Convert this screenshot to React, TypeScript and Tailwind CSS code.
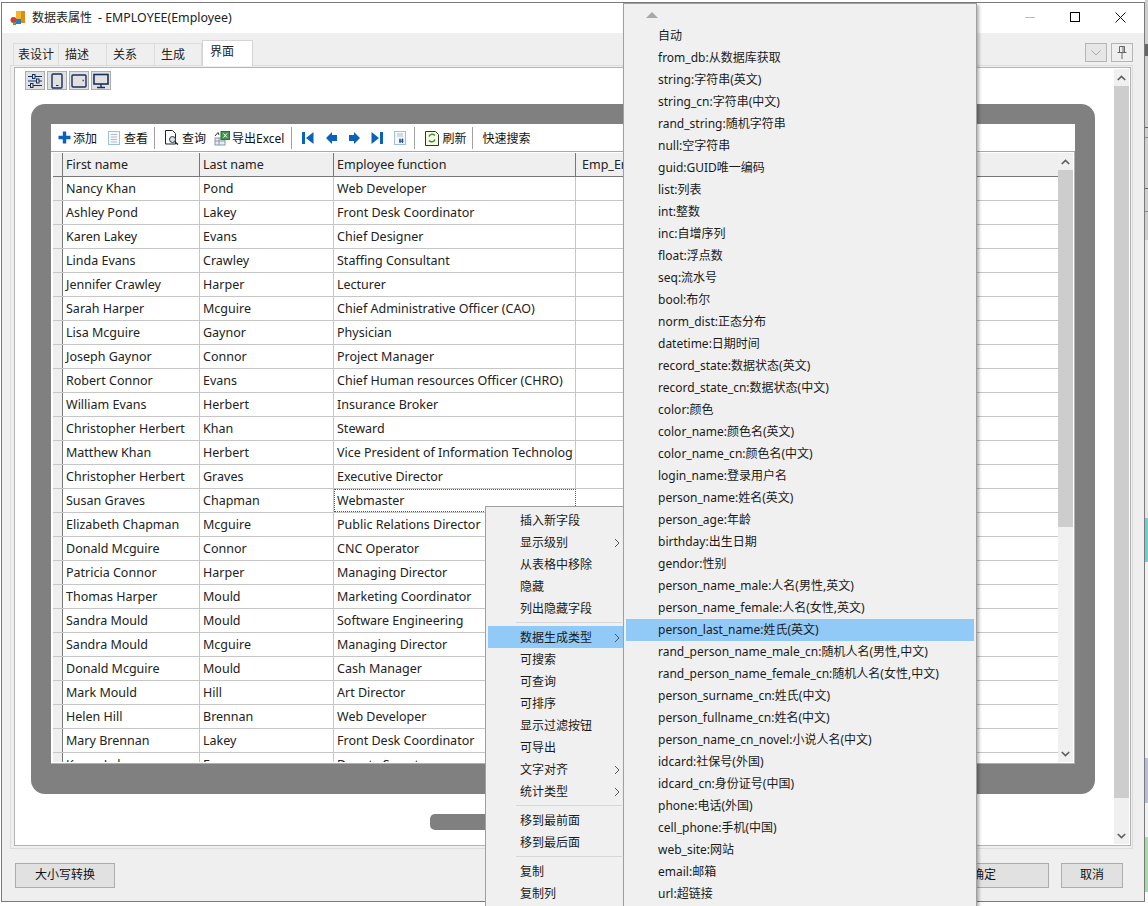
import React from "react";

const people: [string, string, string][] = [
  ["Nancy Khan", "Pond", "Web Developer"],
  ["Ashley Pond", "Lakey", "Front Desk Coordinator"],
  ["Karen Lakey", "Evans", "Chief Designer"],
  ["Linda Evans", "Crawley", "Staffing Consultant"],
  ["Jennifer Crawley", "Harper", "Lecturer"],
  ["Sarah Harper", "Mcguire", "Chief Administrative Officer (CAO)"],
  ["Lisa Mcguire", "Gaynor", "Physician"],
  ["Joseph Gaynor", "Connor", "Project Manager"],
  ["Robert Connor", "Evans", "Chief Human resources Officer (CHRO)"],
  ["William Evans", "Herbert", "Insurance Broker"],
  ["Christopher Herbert", "Khan", "Steward"],
  ["Matthew Khan", "Herbert", "Vice President of Information Technology"],
  ["Christopher Herbert", "Graves", "Executive Director"],
  ["Susan Graves", "Chapman", "Webmaster"],
  ["Elizabeth Chapman", "Mcguire", "Public Relations Director"],
  ["Donald Mcguire", "Connor", "CNC Operator"],
  ["Patricia Connor", "Harper", "Managing Director"],
  ["Thomas Harper", "Mould", "Marketing Coordinator"],
  ["Sandra Mould", "Mould", "Software Engineering"],
  ["Sandra Mould", "Mcguire", "Managing Director"],
  ["Donald Mcguire", "Mould", "Cash Manager"],
  ["Mark Mould", "Hill", "Art Director"],
  ["Helen Hill", "Brennan", "Web Developer"],
  ["Mary Brennan", "Lakey", "Front Desk Coordinator"],
  ["Karen Lakey", "Evans", "Deputy Secretary"],
];

const genTypes = [
  "自动","from_db:从数据库获取","string:字符串(英文)","string_cn:字符串(中文)","rand_string:随机字符串","null:空字符串","guid:GUID唯一编码","list:列表","int:整数","inc:自增序列","float:浮点数","seq:流水号","bool:布尔","norm_dist:正态分布","datetime:日期时间","record_state:数据状态(英文)","record_state_cn:数据状态(中文)","color:颜色","color_name:颜色名(英文)","color_name_cn:颜色名(中文)","login_name:登录用户名","person_name:姓名(英文)","person_age:年龄","birthday:出生日期","gendor:性别","person_name_male:人名(男性,英文)","person_name_female:人名(女性,英文)","person_last_name:姓氏(英文)","rand_person_name_male_cn:随机人名(男性,中文)","rand_person_name_female_cn:随机人名(女性,中文)","person_surname_cn:姓氏(中文)","person_fullname_cn:姓名(中文)","person_name_cn_novel:小说人名(中文)","idcard:社保号(外国)","idcard_cn:身份证号(中国)","phone:电话(外国)","cell_phone:手机(中国)","web_site:网站","email:邮箱","url:超链接",
];

function Up() {
  return (
    <svg viewBox="0 0 9 6" className="w-[9px] h-[6px]">
      <path d="M.8 5 4.5 1.4 8.2 5" fill="none" stroke="#606060" strokeWidth="1.7" />
    </svg>
  );
}
function Down() {
  return (
    <svg viewBox="0 0 9 6" className="w-[9px] h-[6px]">
      <path d="M.8 1 4.5 4.6 8.2 1" fill="none" stroke="#606060" strokeWidth="1.7" />
    </svg>
  );
}

function Scrollbar({ thumbHeight, className = "" }: { thumbHeight: number; className?: string }) {
  return (
    <div className={"flex flex-col bg-[#f0f0f0] w-[15px] " + className}>
      <div className="h-[17px] flex items-center justify-center shrink-0"><Up /></div>
      <div className="flex-1 min-h-0">
        <div className="bg-[#cdcdcd]" style={{ height: thumbHeight }} />
      </div>
      <div className="h-[17px] flex items-center justify-center shrink-0"><Down /></div>
    </div>
  );
}

function ToolText({ children, className = "" }: { children: React.ReactNode; className?: string }) {
  return <span className={"text-[12px] text-[#111] leading-none whitespace-nowrap pt-[2px] " + className}>{children}</span>;
}
function Sep({ className = "" }: { className?: string }) {
  return <div className={"w-px h-[22px] bg-[#a0a0a0] shrink-0 " + className} />;
}
function NavIcon({ d, className = "" }: { d: string; className?: string }) {
  return (
    <svg viewBox="0 0 12 12" className={"w-[12px] h-[12px] shrink-0 " + className}>
      <path d={d} fill="#0a62ba" />
    </svg>
  );
}

function ModeBtn({ children }: { children: React.ReactNode }) {
  return (
    <div className="w-[20px] h-[19px] bg-[#e1e1e1] border border-[#adadad] flex items-center justify-center">
      <svg viewBox="0 0 16 16" className="w-[16px] h-[16px]" fill="none" stroke="#14305e" strokeWidth="1">{children}</svg>
    </div>
  );
}

function Menu1Item({ label, arrow, active }: { label: string; arrow?: boolean; active?: boolean }) {
  return (
    <div className={"h-[22px] flex items-center pl-[32px] pr-[3px] ml-[2px] pt-px text-[12px] text-[#1a1a1a] " + (active ? "bg-[#91c9f7]" : "")}>
      <span className="flex-1 whitespace-nowrap">{label}</span>
      {arrow && (
        <svg viewBox="0 0 6 10" className="w-[6px] h-[10px] mr-px">
          <path d="M1 1 5 5 1 9" fill="none" stroke="#555" strokeWidth="1" />
        </svg>
      )}
    </div>
  );
}
function MenuSep() {
  return <div className="h-px bg-[#d7d7d7] ml-[30px] mr-[2px] my-[3px]" />;
}

export default function App() {
  return (
    <div className="relative w-[1148px] h-[906px] overflow-hidden bg-white font-['Noto_Sans','Noto_Sans_CJK_SC',sans-serif]">
      {/* slivers of the desktop behind the window */}
      <div className="absolute right-0 top-0 w-[3px] h-[240px] bg-[#cfcfcf]" />
      <div className="absolute right-0 top-[44px] w-[3px] h-[12px] bg-[#666666]" />
      <div className="absolute right-0 top-[127px] w-[3px] h-px bg-[#666666]" />
      <div className="absolute right-0 top-[137px] w-[3px] h-px bg-[#888888]" />
      <div className="absolute right-0 top-[188px] w-[3px] h-px bg-[#666666]" />
      <div className="absolute right-0 top-[211px] w-[3px] h-px bg-[#888888]" />
      <div className="absolute right-0 top-[240px] w-[3px] h-[278px] bg-[#e6e6e6]" />
      <div className="absolute right-0 top-[518px] w-[3px] h-[44px] bg-[#6fd0d0]" />
      <div className="absolute right-0 top-[562px] w-[3px] h-[196px] bg-[#f2f2f2]" />
      <div className="absolute right-0 top-[758px] w-[3px] h-[45px] bg-[#b7bcdc]" />
      <div className="absolute right-0 top-[803px] w-[3px] h-[34px] bg-[#f2f2f2]" />
      <div className="absolute right-0 top-[837px] w-[3px] h-[55px] bg-[#a5dba5]" />

      {/* window */}
      <div className="absolute left-px top-[2px] w-[1144px] h-[900px] bg-[#efefef] border border-[#7a7a7a] flex flex-col">
        {/* title bar */}
        <div className="h-[30px] bg-white flex items-center shrink-0">
          <svg viewBox="0 0 16 16" className="w-[16px] h-[16px] ml-[8px]">
            <rect x="6" y="1" width="9" height="12" fill="#f3b62e" />
            <rect x="11" y="1" width="4" height="12" fill="#d98f12" />
            <circle cx="3.5" cy="10" r="3" fill="#d83b2e" />
            <rect x="6" y="9" width="5" height="5" fill="#2f78c4" />
            <rect x="3" y="12" width="3" height="3" fill="#5aa845" />
          </svg>
          <span className="ml-[6px] text-[12px] text-[#222] whitespace-nowrap">数据表属性</span>
          <span className="ml-[6px] text-[12.4px] text-[#222] whitespace-nowrap">- EMPLOYEE(Employee)</span>
          <div className="flex-1" />
          <div className="flex items-center mr-px -mt-[2px]">
            <div className="w-[45px] flex justify-center"><div className="w-[10px] h-px bg-[#bbb]" /></div>
            <div className="w-[45px] flex justify-center mr-px"><div className="w-[10px] h-[10px] border border-black" /></div>
            <div className="w-[45px] flex justify-center">
              <svg viewBox="0 0 11 11" className="w-[11px] h-[11px]"><path d="M.5.5 10.5 10.5M10.5.5.5 10.5" stroke="#111" fill="none" /></svg>
            </div>
          </div>
        </div>

        {/* tabs */}
        <div className="h-[32px] shrink-0 flex items-end pl-[11px] pr-[11px]">
          <div className="flex items-end">
            <div className="h-[22px] w-[46px] bg-[#efefef] border-t border-l border-r border-[#dcdcdc] text-[12px] text-[#222] flex items-center pl-[4px] pt-px">表设计</div>
            <div className="h-[22px] w-[48px] bg-[#efefef] border-t border-r border-[#dcdcdc] text-[12px] text-[#222] flex items-center pl-[6px] pt-px">描述</div>
            <div className="h-[22px] w-[48px] bg-[#efefef] border-t border-r border-[#dcdcdc] text-[12px] text-[#222] flex items-center pl-[6px] pt-px">关系</div>
            <div className="h-[22px] w-[47px] bg-[#efefef] border-t border-r border-[#dcdcdc] text-[12px] text-[#222] flex items-center pl-[6px] pt-px">生成</div>
            <div className="relative z-10 -mb-px h-[26px] w-[51px] bg-white border border-b-0 border-[#d4d4d4] text-[12px] text-[#222] flex items-center pl-[7px] pb-[3px]">界面</div>
          </div>
          <div className="flex-1" />
          <div className="flex gap-[4px] mb-[3px]">
            <div className="w-[22px] h-[19px] bg-[#e6e6e6] border border-[#b5b5b5] flex items-center justify-center">
              <svg viewBox="0 0 10 6" className="w-[10px] h-[6px]"><path d="M.5.5 5 5 9.5.5" fill="none" stroke="#aaa" /></svg>
            </div>
            <div className="w-[22px] h-[19px] bg-[#efefef] border border-[#b5b5b5] flex items-center justify-center">
              <svg viewBox="0 0 10 13" className="w-[10px] h-[13px]"><path d="M2.5.5h5v6h-5zM.5 6.5h9M5 6.5V13M6 1v5" fill="none" stroke="#666" /></svg>
            </div>
          </div>
        </div>

        {/* tab page */}
        <div className="flex-1 min-h-0 ml-[8px] mr-[11px] border border-[#dcdcdc] pl-[3px] pt-px pr-px pb-[2px]">
          <div className="h-full border border-[#b4b4b4] bg-white flex">
            <div className="flex-1 min-w-0 flex flex-col pl-[10px] pr-[19px]">
              <div className="h-[19px] mt-[3px] flex gap-[2px] shrink-0">
                <ModeBtn>
                  <path d="M1 3.5h14M1 8h14M1 12.5h14" />
                  <rect x="5.5" y="1.5" width="2.5" height="4" fill="#e1e1e1" />
                  <rect x="9.5" y="6" width="2.5" height="4" fill="#e1e1e1" />
                  <rect x="3.5" y="10.5" width="2.5" height="4" fill="#e1e1e1" />
                </ModeBtn>
                <ModeBtn>
                  <rect x="3" y="1" width="10" height="14" rx="1" strokeWidth="1.4" />
                  <path d="M7 12.5h2.5" />
                </ModeBtn>
                <ModeBtn>
                  <rect x="1" y="2" width="14" height="12" rx="1" strokeWidth="1.4" />
                  <path d="M11.5 7.5h1.5" stroke="#4a4a6a" strokeWidth="1.5" />
                </ModeBtn>
                <ModeBtn>
                  <rect x="1" y="1.5" width="14" height="9.5" strokeWidth="1.6" />
                  <path d="M8 11v3M4 14.5h8" strokeWidth="1.4" />
                </ModeBtn>
              </div>

              <div className="ml-[6px] flex flex-col items-center shrink-0">
                {/* phone-like frame */}
                <div className="self-stretch mt-[14px] h-[690px] bg-[#808080] rounded-[14px] pt-[20px] px-[20px] pb-[30px] flex">
                  <div className="flex-1 min-w-0 bg-white flex flex-col">
                    {/* toolbar */}
                    <div className="h-[28px] shrink-0 flex items-center pl-[7px] border-b border-[#a8a8a8]">
                      <svg viewBox="0 0 13 13" className="w-[13px] h-[13px] shrink-0"><path d="M4.8.5h3.4v4.3h4.3v3.4H8.2v4.3H4.8V8.2H.5V4.8h4.3z" fill="#0a62ba" /></svg>
                      <ToolText className="ml-[2px] w-[25px]">添加</ToolText>
                      <svg viewBox="0 0 12 14" className="w-[12px] h-[14px] shrink-0 ml-[10px]"><rect x=".5" y=".5" width="11" height="13" fill="#f4f8fc" stroke="#9fc0dc" /><path d="M3 3.5h6M3 6h6M3 8.5h6M3 11h6" stroke="#b0bcc8" /></svg>
                      <ToolText className="ml-[4px]">查看</ToolText>
                      <Sep className="ml-[6px]" />
                      <svg viewBox="0 0 16 15" className="w-[16px] h-[15px] shrink-0 ml-[9px]"><path d="M1.5.5h7l3 3V14h-10z" fill="#fff" stroke="#222" /><circle cx="8.5" cy="9.5" r="3" fill="#cfe3ee" stroke="#333" /><path d="M11 12l3 2.5" stroke="#222" strokeWidth="1.5" /></svg>
                      <ToolText className="ml-[2px]">查询</ToolText>
                      <svg viewBox="0 0 16 16" className="w-[16px] h-[16px] shrink-0 ml-[8px]"><rect x="1" y="8" width="10" height="7" fill="#e8eef5" stroke="#8a98a8" /><path d="M1 11h10M5 8v7" stroke="#8a98a8" /><rect x="7" y="1.5" width="8.5" height="8" fill="#3f9b4a" stroke="#2d6e36" /><path d="M9.5 3.5 13 7.5M13 3.5 9.5 7.5" stroke="#fff" /><path d="M1 6 4 2.5 5 5" fill="none" stroke="#333" /></svg>
                      <ToolText className="ml-[2px]">导出Excel</ToolText>
                      <Sep className="ml-[7px]" />
                      <NavIcon className="ml-[10px]" d="M0 0h3v12H0zM11.5 0v12L4 6z" />
                      <NavIcon className="ml-[12px]" d="M6 0v12L0 6zM6 3h5v6H6z" />
                      <NavIcon className="ml-[10px]" d="M6 0v12l6-6zM6 3H1v6h5z" />
                      <NavIcon className="ml-[11px]" d="M9 0h3v12H9zM.5 0v12L8 6z" />
                      <svg viewBox="0 0 12 14" className="w-[12px] h-[14px] shrink-0 ml-[11px]"><rect x=".5" y=".5" width="11" height="13" fill="#f4f8fc" stroke="#9fc0dc" /><path d="M3 3h6M3 5h6" stroke="#b0bcc8" /><path d="M6 7.5V12M8.5 7.5V12M5 9h4.5M5 10.7h4.5" stroke="#1d4f9c" /></svg>
                      <Sep className="ml-[8px]" />
                      <svg viewBox="0 0 14 16" className="w-[14px] h-[16px] shrink-0 ml-[10px]"><path d="M.5 1.5h10l3 3v11H.5z" fill="#fbfbe8" stroke="#333" /><path d="M4 6.5a3.5 3.5 0 0 1 6-1M10 9.5a3.5 3.5 0 0 1-6 1" fill="none" stroke="#2d9a2d" strokeWidth="1.6" /></svg>
                      <ToolText className="ml-[3px]">刷新</ToolText>
                      <Sep className="ml-[6px]" />
                      <ToolText className="ml-[9px]">快速搜索</ToolText>
                    </div>

                    {/* grid */}
                    <div className="flex-1 min-h-0 flex pl-[2px] pt-px pr-px pb-px overflow-hidden border-r border-b border-[#b0b0b0]">
                      <div className="flex-1 min-w-0 overflow-hidden">
                        <div className="h-[24px] bg-[#efefef] border-b border-[#777] flex text-[12.5px] text-[#222]">
                          <div className="w-[10px] shrink-0 border-r border-[#777]" />
                          <div className="w-[137px] shrink-0 border-r border-[#777] pl-[3px] pt-[2px] flex items-center">First name</div>
                          <div className="w-[134px] shrink-0 border-r border-[#777] pl-[3px] pt-[2px] flex items-center">Last name</div>
                          <div className="w-[242px] shrink-0 border-r border-[#777] pl-[3px] pt-[2px] flex items-center">Employee function</div>
                          <div className="flex-1 min-w-0 overflow-hidden pl-[6px] pt-[2px] flex items-center whitespace-nowrap">Emp_Er</div>
                        </div>
                        {people.map((p, i) => (
                          <div key={i} className="h-[24px] flex text-[12.5px] text-[#222] border-b border-[#c6c6c6] overflow-hidden">
                            <div className="w-[10px] shrink-0 border-r border-[#777] bg-[#efefef]" />
                            <div className="w-[137px] shrink-0 border-r border-[#c6c6c6] pl-[3px] pt-px flex items-center whitespace-nowrap overflow-hidden">{p[0]}</div>
                            <div className="w-[134px] shrink-0 border-r border-[#c6c6c6] pl-[3px] pt-px flex items-center whitespace-nowrap overflow-hidden">{p[1]}</div>
                            <div className={"w-[242px] shrink-0 pl-[3px] pt-px flex items-center " + (i === 13 ? "outline-1 outline-dotted outline-[#d02020] -outline-offset-1" : "border-r border-[#c6c6c6]")}>
                              <div className="w-[236px] whitespace-nowrap overflow-hidden">{p[2]}</div>
                            </div>
                            <div className="flex-1" />
                          </div>
                        ))}
                      </div>
                      <Scrollbar className="shrink-0" thumbHeight={357} />
                    </div>
                  </div>
                </div>

                {/* home indicator */}
                <div className="mt-[20px] h-[16px] w-[266px] rounded-[5px] bg-[#808080]" />
              </div>
            </div>
            <Scrollbar className="shrink-0 mt-px mb-px mr-px" thumbHeight={712} />
          </div>
        </div>

        {/* footer */}
        <div className="h-[52px] shrink-0 flex items-center pl-[13px] pr-[21px] gap-[12px]">
          <button className="w-[100px] h-[25px] bg-[#e1e1e1] border border-[#adadad] text-[12px] text-[#111]">大小写转换</button>
          <div className="flex-1" />
          <button className="w-[130px] h-[25px] bg-[#e1e1e1] border border-[#adadad] text-[12px] text-[#111]">确定</button>
          <button className="w-[62px] h-[25px] bg-[#e1e1e1] border border-[#adadad] text-[12px] text-[#111]">取消</button>
        </div>
      </div>

      {/* context menu */}
      <div className="absolute left-[485px] top-[506px] w-[140px] h-[410px] bg-[#f0f0f0] border border-[#a0a0a0] pt-[2px]">
        <Menu1Item label="插入新字段" />
        <Menu1Item label="显示级别" arrow />
        <Menu1Item label="从表格中移除" />
        <Menu1Item label="隐藏" />
        <Menu1Item label="列出隐藏字段" />
        <MenuSep />
        <Menu1Item label="数据生成类型" arrow active />
        <Menu1Item label="可搜索" />
        <Menu1Item label="可查询" />
        <Menu1Item label="可排序" />
        <Menu1Item label="显示过滤按钮" />
        <Menu1Item label="可导出" />
        <Menu1Item label="文字对齐" arrow />
        <Menu1Item label="统计类型" arrow />
        <MenuSep />
        <Menu1Item label="移到最前面" />
        <Menu1Item label="移到最后面" />
        <MenuSep />
        <Menu1Item label="复制" />
        <Menu1Item label="复制列" />
      </div>

      {/* submenu */}
      <div className="absolute left-[623px] top-[3px] w-[354px] h-[920px] bg-[#f0f0f0] border border-[#a0a0a0] shadow-[2px_2px_3px_rgba(0,0,0,0.3)]">
        <div className="h-[21px] flex items-center pl-[22px]">
          <svg viewBox="0 0 12 6" className="w-[12px] h-[6px]"><path d="M6 0 12 6H0z" fill="#a8a8a8" /></svg>
        </div>
        {genTypes.map((t) => (
          <div key={t} className={"h-[22px] flex items-center pl-[32px] ml-[2px] mr-[2px] text-[12px] text-[#1a1a1a] whitespace-nowrap " + (t.startsWith("person_last_name") ? "bg-[#91c9f7]" : "")}>{t}</div>
        ))}
      </div>
    </div>
  );
}
